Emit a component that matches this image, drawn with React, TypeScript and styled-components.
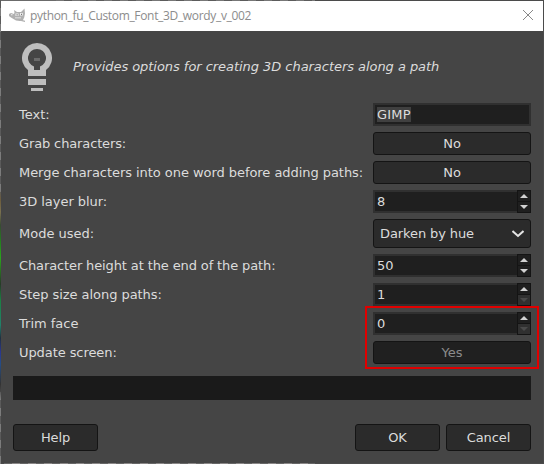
import React from "react";
import styled, { createGlobalStyle, css } from "styled-components";

const GlobalStyle = createGlobalStyle`
  * { box-sizing: border-box; }
  html, body { margin: 0; padding: 0; overflow: hidden; }
  body { background: #555; }
`;

const Desktop = styled.div`
  width: 544px;
  height: 464px;
  padding: 1px;
  background:
    linear-gradient(#6b6b6b, #6b6b6b) 1px 0 / 55px 1px no-repeat,
    repeating-linear-gradient(90deg, #5c5c5c 0 8px, #777 8px 16px) 0 0 / 315px 1px no-repeat,
    repeating-linear-gradient(90deg, #666 0 8px, #8b8888 8px 16px) 4px 463px / 311px 1px no-repeat,
    linear-gradient(transparent 190px, #6c5c3c 200px, #7a7050 212px, #3a4a34 225px, #247a20 240px, #2ba51c 258px, #283a28 284px, #1b8042 300px, #22806a 325px, #203040 338px, #2a3690 352px, #254d86 364px, #333 384px, transparent 400px) 0 0 / 1px 464px no-repeat,
    repeating-linear-gradient(#5a5a5a 0 8px, #7c7c7c 8px 16px) 0 0 / 1px 464px no-repeat,
    #4b4b4b;
`;

const Window = styled.main`
  width: 542px;
  height: 462px;
  display: flex;
  flex-direction: column;
  background: #454545;
  color: #dcdcdc;
  font-family: "DejaVu Sans", sans-serif;
  font-size: 13px;
`;

const TitleBar = styled.header`
  height: 30px;
  flex: none;
  display: flex;
  align-items: center;
  padding: 0 9px 0 8px;
  background: #fff;
  color: #8c8c8c;
`;

const Title = styled.h1`
  margin: 0 0 0 4px;
  flex: 1;
  font: 400 12px/16px "Open Sans", "Noto Sans", sans-serif;
  letter-spacing: -0.33px;
  white-space: nowrap;
`;

const CloseButton = styled.button`
  width: 12px;
  height: 12px;
  padding: 0;
  border: 0;
  background: none;
  display: flex;
`;

const Intro = styled.section`
  height: 72px;
  flex: none;
  display: flex;
  padding: 12px 0 0 21px;
`;

const Description = styled.p`
  margin: 16px 0 0 21px;
  line-height: 16px;
  font-style: italic;
  letter-spacing: -0.045px;
  white-space: nowrap;
`;

const Form = styled.form`
  display: flex;
  flex-direction: column;
  gap: 6px;
  padding: 0 12px;
`;

const Row = styled.div<{ $tall?: boolean }>`
  height: ${(p) => (p.$tall ? 29 : 23)}px;
  display: grid;
  grid-template-columns: 354px 158px;
  column-gap: 6px;
  align-items: center;
`;

const Label = styled.label<{ $spacing?: number }>`
  padding-left: 6px;
  line-height: 16px;
  white-space: nowrap;
  letter-spacing: ${(p) => p.$spacing ?? 0}px;
`;

const Field = styled.div`
  height: 23px;
  display: flex;
  align-items: center;
  border: 2px solid #303030;
  background: #1f1f1f;
  padding-left: 2px;
  line-height: 15px;
`;

const Selection = styled.span`
  height: 15px;
  background: #404040;
  letter-spacing: 0.2px;
`;

const SpinField = styled(Field)`
  border-right: 0;
`;

const SpinButtons = styled.div`
  width: 14px;
  height: 23px;
  margin: -2px 0 -2px auto;
  display: flex;
  flex-direction: column;
  border: 1px solid #141414;
  background: #141414;
  gap: 1px;
`;

const SpinButton = styled.button<{ $disabled?: boolean }>`
  flex: 1;
  min-height: 0;
  padding: 0;
  border: 0;
  display: flex;
  align-items: center;
  justify-content: center;
  background: ${(p) => (p.$disabled ? "#303030" : "#1f1f1f")};
  color: ${(p) => (p.$disabled ? "#4a4a4a" : "#d2d2d2")};
`;

const buttonFace = css`
  border: 1px solid #141414;
  border-radius: 3px;
  background: #2b2b2b;
  color: #dcdcdc;
  font: 13px/16px "DejaVu Sans", sans-serif;
  display: flex;
  align-items: center;
  justify-content: center;
  padding: 0;
`;

const Toggle = styled.button<{ $inactive?: boolean }>`
  ${buttonFace}
  height: 23px;
  ${(p) => p.$inactive && css`background: #202020; color: #8c8c8c;`}
`;

const Combo = styled.button`
  ${buttonFace}
  height: 29px;
  justify-content: space-between;
  padding: 0 6px;
  letter-spacing: -0.1px;
`;

const Progress = styled.div`
  height: 24px;
  margin: 12px 12px 0;
  background: #1a1a1a;
`;

const Actions = styled.footer`
  display: flex;
  gap: 6px;
  margin: 24px 12px 0;
`;

const ActionButton = styled.button`
  ${buttonFace}
  width: 85px;
  height: 27px;
  letter-spacing: -0.1px;
  &:first-child { margin-right: auto; }
`;

const Highlight = styled.div`
  position: absolute;
  left: 365px;
  top: 306px;
  width: 174px;
  height: 63px;
  border: 2px solid #e00000;
  pointer-events: none;
`;

const Wilber = () => (
  <svg width="17" height="16" viewBox="0 0 17 16" fill="#b0b0b0">
    <path d="M0 6 2 5l3 1 .5-1.500L5 2l3 2h4l3.500-3.500.5 5-.8 4L14 12l-3 1-4-.5L4.500 11 2 9.500 0 8z" />
    <path d="M6.500 5.500h3v2.500h-3zM11 5h2.800v2.500H11zM2 6.300h1.500v1H2zM6 9.500h6v.8H6z" fill="#f1f1f1" />
    <path d="M7.500 6.200h1.200v1.200H7.500zM12 5.700h1v1.200h-1z" fill="#777" />
    <path d="m10 11 6 1.800v1.200l-6-1.500z" />
  </svg>
);

const Bulb = () => (
  <svg width="30" height="48" viewBox="0 0 30 48" fill="#bebebe">
    <path
      fillRule="evenodd"
      d="M15 0A15 15 0 0 1 24 27V33H6V27A15 15 0 0 1 15 0ZM15 6A9 9 0 0 0 12 23.500V27H18V23.500A9 9 0 0 0 15 6Z"
    />
    <path d="M12 15h6v3h-6z" fill="#6b6b6b" />
    <path d="M6 36h18v6H6zM9 45h12v3H9z" />
  </svg>
);

const Spin = ({ value, atMin }: { value: string; atMin?: boolean }) => (
  <SpinField>
    {value}
    <SpinButtons>
      <SpinButton type="button" aria-label="Increase">
        <svg width="8" height="4" viewBox="0 0 8 4"><path d="M4 0 8 4H0z" fill="currentColor" /></svg>
      </SpinButton>
      <SpinButton type="button" aria-label="Decrease" $disabled={atMin}>
        <svg width="8" height="4" viewBox="0 0 8 4"><path d="M0 0h8L4 4z" fill="currentColor" /></svg>
      </SpinButton>
    </SpinButtons>
  </SpinField>
);

export default function App() {
  return (
    <Desktop>
      <GlobalStyle />
      <Window>
        <TitleBar>
          <Wilber />
          <Title>python_fu_Custom_Font_3D_wordy_v_002</Title>
          <CloseButton aria-label="Close">
            <svg width="12" height="12" viewBox="0 0 12 12" stroke="#888" strokeWidth="1">
              <path d="m1 0 10 10M11 0 1 10" />
            </svg>
          </CloseButton>
        </TitleBar>
        <Intro>
          <Bulb />
          <Description>Provides options for creating 3D characters along a path</Description>
        </Intro>
        <Form>
          <Row>
            <Label>Text:</Label>
            <Field><Selection>GIMP</Selection></Field>
          </Row>
          <Row>
            <Label $spacing={-0.13}>Grab characters:</Label>
            <Toggle type="button">No</Toggle>
          </Row>
          <Row>
            <Label $spacing={-0.05}>Merge characters into one word before adding paths:</Label>
            <Toggle type="button">No</Toggle>
          </Row>
          <Row>
            <Label $spacing={-0.04}>3D layer blur:</Label>
            <Spin value="8" />
          </Row>
          <Row $tall>
            <Label>Mode used:</Label>
            <Combo type="button">
              Darken by hue
              <svg width="12" height="8" viewBox="0 0 12 8" fill="none" stroke="#e4e4e4" strokeWidth="2">
                <path d="m.5 1 5.500 5L11.500 1" />
              </svg>
            </Combo>
          </Row>
          <Row>
            <Label $spacing={-0.12}>Character height at the end of the path:</Label>
            <Spin value="50" />
          </Row>
          <Row>
            <Label $spacing={-0.05}>Step size along paths:</Label>
            <Spin value="1" atMin />
          </Row>
          <Row>
            <Label>Trim face</Label>
            <Spin value="0" atMin />
          </Row>
          <Row>
            <Label $spacing={-0.08}>Update screen:</Label>
            <Toggle type="button" $inactive>Yes</Toggle>
          </Row>
        </Form>
        <Progress />
        <Actions>
          <ActionButton>Help</ActionButton>
          <ActionButton>OK</ActionButton>
          <ActionButton>Cancel</ActionButton>
        </Actions>
        <Highlight />
      </Window>
    </Desktop>
  );
}
